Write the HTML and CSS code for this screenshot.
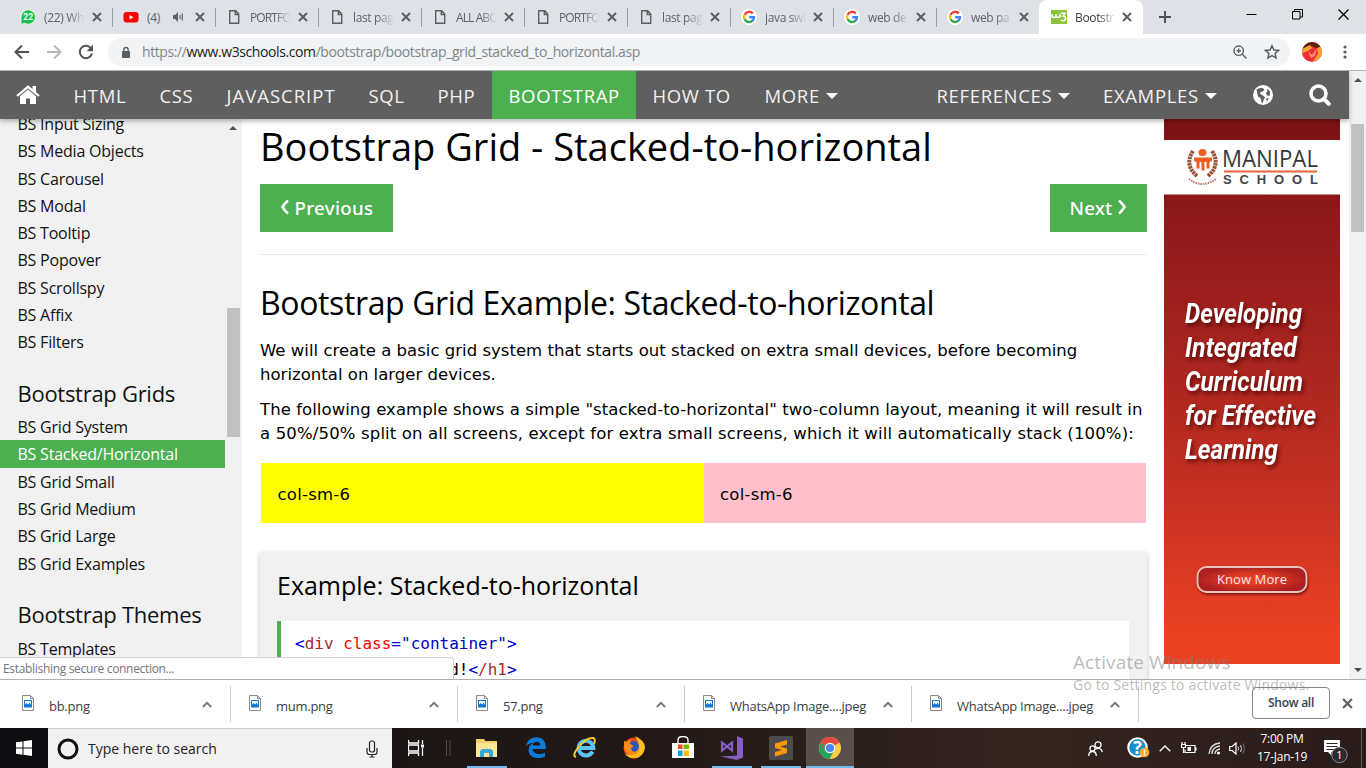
FILE: index.html
```html
<!DOCTYPE html>
<html lang="en">
<head>
<meta charset="utf-8">
<title>Bootstrap Grid - Stacked-to-horizontal</title>
<link rel="stylesheet" href="styles.css">
</head>
<body>
<svg class="defs" width="0" height="0">
  <symbol id="x" viewBox="0 0 10 10"><path d="M1 1l8 8M9 1L1 9" stroke="#5a5d61" stroke-width="1.9" fill="none"/></symbol>
  <symbol id="doc" viewBox="0 0 16 16"><path d="M3.7 1.700h6l3 3.300v9.300h-9zM9.300 2v3.500h3.400" stroke="#5a5d61" stroke-width="1.400" fill="none"/></symbol>
  <symbol id="google" viewBox="0 0 16 16"><circle cx="8" cy="8" r="8" fill="#fff"/><g fill="none" stroke-width="2.400"><path d="M11.800 4.400A5 5 0 0 0 3.600 5.700" stroke="#ea4335"/><path d="M3.600 5.700a5 5 0 0 0 0 4.600" stroke="#fbbc05"/><path d="M3.600 10.300a5 5 0 0 0 7.900 1.400" stroke="#34a853"/><path d="M11.300 11.900A5 5 0 0 0 13 8.200H8.200" stroke="#4285f4"/></g></symbol>
  <symbol id="img" viewBox="0 0 12 16"><path d="M.5.500h8l3 3v12H.5z" fill="#fff" stroke="#8a8a8a"/><path d="M8.500.500v3h3" fill="none" stroke="#8a8a8a"/><rect x="2" y="5" width="8" height="7.500" fill="#1279d7"/><path d="M3 6h6v4L7.500 7.500 6.200 9.500 4.600 8 3 9.500z" fill="#fff"/></symbol>
  <symbol id="up" viewBox="0 0 10 7"><path d="M.8 6L5 1.800 9.200 6" stroke="#777" stroke-width="1.900" fill="none"/></symbol>
</svg>

<header class="tabs">
  <div class="tab"><svg class="fav" viewBox="0 0 16 16"><path d="M1 15.500V8a7.200 7.200 0 1 1 3.500 6.200z" fill="#12c24c" stroke="#fff" stroke-width=".8"/><text x="8.200" y="10.900" text-anchor="middle" class="wa">22</text></svg><span class="title">(22) Wh</span><svg class="x"><use href="#x"/></svg></div>
  <div class="tab"><svg class="fav" viewBox="0 0 16 16"><rect x=".5" y="3" width="15" height="10.500" rx="3" fill="#f00"/><path d="M6.500 6v4.500L10.500 8.200z" fill="#fff"/></svg><span class="title short">(4)</span><svg class="snd" viewBox="0 0 12 12"><path d="M1 4h2l3-3v10L3 8H1z" fill="#5f6368"/><path d="M8 4v4M10.300 2.500v7" stroke="#5f6368" stroke-width="1.200"/></svg><svg class="x"><use href="#x"/></svg></div>
  <div class="tab"><svg class="fav"><use href="#doc"/></svg><span class="title caps">PORTFO</span><svg class="x"><use href="#x"/></svg></div>
  <div class="tab"><svg class="fav"><use href="#doc"/></svg><span class="title">last pag</span><svg class="x"><use href="#x"/></svg></div>
  <div class="tab"><svg class="fav"><use href="#doc"/></svg><span class="title caps">ALL ABO</span><svg class="x"><use href="#x"/></svg></div>
  <div class="tab"><svg class="fav"><use href="#doc"/></svg><span class="title caps">PORTFO</span><svg class="x"><use href="#x"/></svg></div>
  <div class="tab"><svg class="fav"><use href="#doc"/></svg><span class="title">last pag</span><svg class="x"><use href="#x"/></svg></div>
  <div class="tab"><svg class="fav"><use href="#google"/></svg><span class="title">java swi</span><svg class="x"><use href="#x"/></svg></div>
  <div class="tab"><svg class="fav"><use href="#google"/></svg><span class="title">web de</span><svg class="x"><use href="#x"/></svg></div>
  <div class="tab last"><svg class="fav"><use href="#google"/></svg><span class="title">web pa</span><svg class="x"><use href="#x"/></svg></div>
  <div class="tab active"><svg class="fav" viewBox="0 0 16 16"><rect y="1" width="16" height="14" fill="#8ac43f"/><path d="M1 5v1.500q0 2 2 2t2-2V5m0 1.500q0 2 2 2t2-2V5M10 4.200h4L11.800 7q2.700-.2 2.700 2.200T12 11.700q-1.500 0-2.200-.8" stroke="#fff" stroke-width="1.500" fill="none"/></svg><span class="title">Bootstr</span><svg class="x"><use href="#x"/></svg></div>
  <svg class="plus" viewBox="0 0 12 12"><path d="M6 0v12M0 6h12" stroke="#4a4d51" stroke-width="1.900"/></svg>
  <div class="winctl">
    <svg width="11" height="11"><path d="M.5 5.500h10" stroke="#000"/></svg>
    <svg width="11" height="11"><path d="M.5 2.500h7.500v7.500H.5zM2.500 2.500v-2h8v7.500H8" stroke="#000" fill="none"/></svg>
    <svg width="11" height="11"><path d="M.5.500l10 10M10.500.500l-10 10" stroke="#000" stroke-width="1.200"/></svg>
  </div>
</header>

<div class="toolbar">
  <svg class="nav-ic" viewBox="0 0 16 16"><path d="M15 8H2M8 1.500L1.500 8 8 14.500" stroke="#505357" stroke-width="2" fill="none"/></svg>
  <svg class="nav-ic" viewBox="0 0 16 16"><path d="M1 8h13M8 1.500L14.500 8 8 14.500" stroke="#b5b7ba" stroke-width="2" fill="none"/></svg>
  <svg class="nav-ic" viewBox="0 0 16 16"><path d="M13.200 4.500A6.200 6.200 0 1 0 14 9.500" stroke="#505357" stroke-width="2" fill="none"/><path d="M15 .8v6.400H8.600z" fill="#505357"/></svg>
  <div class="omni">
    <svg class="lock" viewBox="0 0 10 12"><rect x="1" y="4.500" width="8" height="7" rx="1" fill="#5a5d61"/><path d="M2.800 5V3.200a2.200 2.200 0 0 1 4.400 0V5" stroke="#5a5d61" stroke-width="1.300" fill="none"/></svg>
    <span class="url">https://<b>www.w3schools.com</b>/bootstrap/bootstrap_grid_stacked_to_horizontal.asp</span>
    <svg class="mag" viewBox="0 0 14 14"><circle cx="5.700" cy="5.700" r="4.700" stroke="#5a5d61" stroke-width="1.400" fill="none"/><path d="M9 9l4.500 4.500M3.500 5.700h4.400M5.700 3.500v4.400" stroke="#5a5d61" stroke-width="1.400"/></svg>
    <svg class="star" viewBox="0 0 14 14"><path d="M7 1.500l1.700 3.700 4.100.4-3.100 2.700.9 4L7 10.200l-3.600 2.100.9-4L1.200 5.600l4.100-.4z" stroke="#5a5d61" stroke-width="1.300" fill="none"/></svg>
  </div>
  <svg class="avatar" viewBox="0 0 20 20"><defs><clipPath id="av"><circle cx="10" cy="10" r="10"/></clipPath></defs><g clip-path="url(#av)"><path d="M0 0h20v20H0z" fill="#ef2f35"/><path d="M0 0h20v5l-5 2-5-3-10 4z" fill="#5c2410"/><path d="M0 7l8-4 2 3-4 3-6 2zM15 6l5-2v9l-4 5-5 1 5-7z" fill="#f9a137"/><path d="M6 9l4 4 5-7-2 8-4 2z" fill="#ff8a6c"/></g></svg>
  <svg class="dots" viewBox="0 0 4 14"><circle cx="2" cy="2" r="1.600"/><circle cx="2" cy="7" r="1.600"/><circle cx="2" cy="12" r="1.600"/></svg>
</div>

<main class="page">
  <div class="view">
    <nav class="topnav">
      <a class="n-home"><svg width="24" height="20" viewBox="0 0 24 20"><path d="M1 11L12 1.800 23 11" stroke="#fff" stroke-width="2.200" fill="none"/><path d="M16.500 1H20v7l-3.500-3z" fill="#fff"/><path d="M12 4.500l8 6.800V19h-6v-5.500h-4V19H4v-7.700z" fill="#fff"/></svg></a>
      <a class="n-html">HTML</a><a class="n-css">CSS</a><a class="n-js">JAVASCRIPT</a><a class="n-sql">SQL</a><a class="n-php">PHP</a><a class="n-bs">BOOTSTRAP</a><a class="n-how">HOW TO</a><a class="n-more">MORE<i></i></a>
      <a class="n-ref">REFERENCES<i></i></a><a class="n-ex">EXAMPLES<i></i></a>
      <a class="n-globe"><svg width="20" height="20" viewBox="0 0 20 20"><circle cx="10" cy="10" r="10" fill="#fff"/><path d="M3.500 4.500Q6 2.500 9.500 3l2 1.500-1.500 2-2.500.5-.5 2 3 1.500 2 2-1.500 2.500-.5 3-1.500-1-1-4L5 11.500zM14 3.500l3 3-.5 4.500-2.500-.5-1-2.500 1.500-2zM13 13.500l3-.5-2 3.500z" fill="#5f5f5f"/></svg></a>
      <a class="n-search"><svg width="22" height="22" viewBox="0 0 22 22"><circle cx="9.500" cy="9.500" r="7.500" stroke="#fff" stroke-width="3.600" fill="none"/><path d="M15 15l4.800 4.800" stroke="#fff" stroke-width="4" stroke-linecap="round"/></svg></a>
    </nav>
    <div class="cols">
      <aside class="side">
        <div class="links">
          <a>BS Input Sizing</a><a>BS Media Objects</a><a>BS Carousel</a><a>BS Modal</a><a>BS Tooltip</a><a>BS Popover</a><a>BS Scrollspy</a><a>BS Affix</a><a>BS Filters</a>
          <h2>Bootstrap Grids</h2>
          <a>BS Grid System</a><a class="on">BS Stacked/Horizontal</a><a>BS Grid Small</a><a>BS Grid Medium</a><a>BS Grid Large</a><a>BS Grid Examples</a>
          <h2 class="second">Bootstrap Themes</h2>
          <a>BS Templates</a>
        </div>
        <div class="sbar"><i class="tri"></i><i class="thumb"></i></div>
      </aside>
      <article class="content">
        <h1>Bootstrap Grid - Stacked-to-horizontal</h1>
        <div class="pager"><a class="prev"><svg width="10" height="18" viewBox="0 0 10 16"><path d="M8 1.500Q5 4 2.500 8 5 12 8 14.500" stroke="#fff" stroke-width="2.600" fill="none"/></svg>Previous</a><a class="next">Next<svg width="10" height="18" viewBox="0 0 10 16"><path d="M2 1.500Q5 4 7.500 8 5 12 2 14.500" stroke="#fff" stroke-width="2.600" fill="none"/></svg></a></div>
        <hr>
        <h2>Bootstrap Grid Example: Stacked-to-horizontal</h2>
        <p>We will create a basic grid system that starts out stacked on extra small devices, before becoming<br>horizontal on larger devices.</p>
        <p><span class="wide">The following example shows a simple "stacked-to-horizontal" two-column layout, meaning it will result in</span><br><span class="wider">a 50%/50% split on all screens, except for extra small screens, which it will automatically stack (100%):</span></p>
        <div class="row"><div class="yellow">col-sm-6</div><div class="pink">col-sm-6</div></div>
        <section class="example">
          <h3>Example: Stacked-to-horizontal</h3>
          <pre><u>&lt;</u><s>div</s> <em>class</em><u>="container"&gt;</u>
  <u>&lt;</u><s>h1</s><u>&gt;</u>Hello World!<u>&lt;</u><s>/h1</s><u>&gt;</u></pre>
        </section>
      </article>
      <svg class="ad" width="176" height="545" viewBox="0 0 176 545">
        <defs>
          <linearGradient id="ag" x1="0" y1="0" x2="0" y2="1"><stop offset="0" stop-color="#7b1216"/><stop offset=".14" stop-color="#8b1719"/><stop offset=".45" stop-color="#a9251f"/><stop offset=".75" stop-color="#ce3423"/><stop offset=".94" stop-color="#eb4123"/><stop offset="1" stop-color="#ec4223"/></linearGradient>
          <radialGradient id="bg"><stop offset="0" stop-color="#ed4325"/><stop offset=".5" stop-color="#d93722"/><stop offset="1" stop-color="#ab2121"/></radialGradient>
        </defs>
        <rect width="176" height="545" fill="url(#ag)"/>
        <rect y="21" width="176" height="54.500" fill="#fff"/>
        <path d="M29 32q-9 14 4 25M48 32q9 14-4 25" stroke="#9b5139" stroke-width="4" stroke-dasharray="2.500 .7" fill="none"/>
        <path d="M25 60q13 10 27 0" stroke="#b97962" stroke-width="2" stroke-dasharray="1.500 1" fill="none"/>
        <ellipse cx="38.500" cy="33.500" rx="4" ry="3.500" fill="#ef5c22"/>
        <path d="M30 38.500h18v3.500l-2.500 1v6.500h-3V43h-2v8.500h-3V43h-2v6.500h-3V43L30 42z" fill="#ef5c22"/>
        <text x="58" y="48" class="man" textLength="96" lengthAdjust="spacingAndGlyphs">MANIPAL</text>
        <path d="M60 52.500h93" stroke="#e6653a" stroke-width="2"/>
        <text x="59" y="65" class="sch" textLength="95">SCHOOL</text>
        <g class="adt">
          <text x="21" y="204" textLength="117" lengthAdjust="spacingAndGlyphs">Developing</text>
          <text x="21" y="238" textLength="112" lengthAdjust="spacingAndGlyphs">Integrated</text>
          <text x="21" y="272" textLength="118" lengthAdjust="spacingAndGlyphs">Curriculum</text>
          <text x="21" y="306" textLength="131" lengthAdjust="spacingAndGlyphs">for Effective</text>
          <text x="21" y="340" textLength="93" lengthAdjust="spacingAndGlyphs">Learning</text>
        </g>
        <rect x="33.500" y="448" width="109" height="25" rx="9" class="btn"/>
        <text x="53" y="465" class="know" textLength="70">Know More</text>
      </svg>
    </div>
  </div>
  <div class="pbar"><i class="tri"></i><i class="thumb"></i><i class="tri down"></i></div>
  <div class="status">Establishing secure connection...</div>
</main>

<footer class="downloads">
  <div class="dl"><svg class="fi"><use href="#img"/></svg><span>bb.png</span><svg class="up"><use href="#up"/></svg></div>
  <div class="dl"><svg class="fi"><use href="#img"/></svg><span>mum.png</span><svg class="up"><use href="#up"/></svg></div>
  <div class="dl"><svg class="fi"><use href="#img"/></svg><span>57.png</span><svg class="up"><use href="#up"/></svg></div>
  <div class="dl"><svg class="fi"><use href="#img"/></svg><span>WhatsApp Image....jpeg</span><svg class="up"><use href="#up"/></svg></div>
  <div class="dl"><svg class="fi"><use href="#img"/></svg><span>WhatsApp Image....jpeg</span><svg class="up"><use href="#up"/></svg></div>
  <div class="showall">Show all</div>
  <svg class="dlx"><use href="#x"/></svg>
</footer>

<div class="taskbar">
  <div class="start"><svg width="16" height="16" viewBox="0 0 16 16"><path d="M0 2.300L6.500 1.400v6.200H0zM7.500 1.200L16 0v7.600H7.500zM0 8.500h6.500v6.200L0 13.800zM7.500 8.500H16V16l-8.500-1.200z" fill="#fff"/></svg></div>
  <div class="search"><svg width="22" height="22" viewBox="0 0 22 22"><circle cx="11" cy="11" r="9" stroke="#111" stroke-width="3" fill="none"/></svg><span>Type here to search</span><svg class="mic" width="12" height="18" viewBox="0 0 12 18"><rect x="3.500" y="1" width="5" height="11" rx="2" fill="none" stroke="#222" stroke-width="1.200"/><path d="M1 8v4q0 2.500 2.500 2.500h5Q11 14.500 11 12V8M6 14.500V17M3.500 17h5" stroke="#222" stroke-width="1.200" fill="none"/></svg></div>
  <div class="tv"><svg width="16" height="16" viewBox="0 0 16 16"><path d="M.5 0v3h10V0M.5 16v-3h10v3M.5 5h10v6H.5zM14.500 0v4M14.500 8v8" stroke="#fff" stroke-width="1.300" fill="none"/><rect x="13" y="4.500" width="3" height="3" fill="#fff"/></svg></div>
  <svg class="grip" width="5" height="16"><path d="M.5 0v16M4 0v16" stroke="#554d4c"/></svg>
  <div class="apps">
    <div class="app open"><svg width="22" height="19" viewBox="0 0 22 19"><path d="M0 1h8l1.500 2H21v16H0z" fill="#f5ce61"/><path d="M0 5h21v14H0z" fill="#ffe695"/><path d="M4 19v-6l2-2h9l2 2v6h-4v-4H8v4z" fill="#35a8e0"/></svg></div>
    <div class="app"><svg width="20" height="21" viewBox="0 0 20 21"><path d="M0 9.500C1 3 5.500.2 10.500.2c6 0 9.500 4.600 9.300 9.800v2H6.500c.3 3.500 3.300 5 6.500 5 2.300 0 4.300-.6 6-1.600v4c-2 1.100-4.500 1.600-7.200 1.600C6 21 2.500 17.500 2.600 13 2.700 9.500 4.600 7 8 5.700 5 5.700 1.700 6.800 0 9.500zM6.700 8.500h7.600c0-2.500-1.300-3.800-3.600-3.800-2.200 0-3.600 1.500-4 3.800z" fill="#0b7bdc"/></svg></div>
    <div class="app"><svg width="24" height="23" viewBox="0 0 24 23"><path d="M19.500 15.500a7.300 7.300 0 1 1 .8-3.500H7" stroke="#5cc4f2" stroke-width="4" fill="none"/><path d="M3 21Q-1 20 4 13 13 1 20 2q3 .6 1 6" stroke="#f7c82f" stroke-width="2" fill="none"/></svg></div>
    <div class="app"><svg width="24" height="23" viewBox="0 0 24 23"><circle cx="12" cy="12" r="10.500" fill="#f5471d"/><path d="M13 0q9 4 10 11-1 9-9 11-7 1-11-4 6 2 10-1 7-7 0-17z" fill="#ffbd20"/><circle cx="11.500" cy="10.500" r="5.500" fill="#2958b7"/><path d="M2 5l3 1 4-3-1 5 4 2-3 2 1 3q3 2 7-1-2 6-9 5-6-3-6-9z" fill="#ff8a16"/></svg></div>
    <div class="app"><svg width="24" height="23" viewBox="0 0 24 23"><path d="M7 9V4q0-3.500 5-3.500T17 4v5" stroke="#fff" stroke-width="1.300" fill="none"/><path d="M1 7h22v15H1z" fill="#fff"/><path d="M7 8.500h4.500V13H7z" fill="#f04d20"/><path d="M12.500 8.500H18V13h-5.500z" fill="#78b800"/><path d="M7 14.500h4.500V20H7z" fill="#009de8"/><path d="M12.500 14.500H18V20h-5.500z" fill="#ffb900"/></svg></div>
    <div class="app open"><svg width="24" height="24" viewBox="0 0 24 24"><path d="M17 0l6 2.500v19L17 24 0 20.500l17-1z" fill="#865fc5"/><path d="M2 6.500v8L12 6.500v8z" fill="none" stroke="#865fc5" stroke-width="2.200"/></svg></div>
    <div class="app open"><svg width="24" height="24" viewBox="0 0 24 24"><rect width="24" height="24" rx="1.500" fill="#4b4b4b"/><path d="M6 7.500L18 4v4.500l-7 2 7 2V17L6 20.500V16l7-2-7-2z" fill="#ff9800"/></svg></div>
    <div class="app open current"><svg width="22" height="22" viewBox="0 0 22 22"><circle cx="11" cy="11" r="11" fill="#ffcd42"/><path d="M11 11L1.500 5.500A11 11 0 0 1 20.500 5.500z" fill="#e2483d"/><path d="M11 11L1.500 5.500A11 11 0 0 0 10.500 22L15 14z" fill="#1da462"/><path d="M11 5.500h9.500M6 14L1.500 5.500" stroke="#e2483d" stroke-width="1"/><circle cx="11" cy="11" r="5.300" fill="#fff"/><circle cx="11" cy="11" r="4.100" fill="#4a86ee"/></svg></div>
  </div>
  <div class="tray">
    <svg width="15" height="15" viewBox="0 0 15 15"><g stroke="#fff" stroke-width="1.300" fill="none"><circle cx="10" cy="3.800" r="3"/><circle cx="4.500" cy="7.500" r="2.600"/><path d="M7.500 8Q13 6 14.300 11M.7 15q0-4.500 3.800-4.500T8.300 15"/></g></svg>
    <svg class="t-help" width="23" height="22" viewBox="0 0 23 22"><circle cx="10.500" cy="10.500" r="9.300" fill="#168fd0" stroke="#fff" stroke-width="2"/><text x="10.500" y="17" class="q" text-anchor="middle">?</text><circle cx="17.500" cy="15.500" r="4.800" fill="#f8ae22"/><path d="M17.500 12.500v6" stroke="#fff" stroke-width="1.500"/></svg>
    <svg class="t-up" width="12" height="7" viewBox="0 0 12 7"><path d="M.7 6.300L6 1l5.300 5.300" stroke="#fff" stroke-width="1.300" fill="none"/></svg>
    <svg class="t-bat" width="16" height="12" viewBox="0 0 16 12"><path d="M4.500 3.500H14v7H4v-3M15 5.500v3M1 0v2.500M4 0v2.500M.5 2.500h4v3h-4zM2.500 5.500v5.500" stroke="#fff" stroke-width="1.200" fill="none"/><path d="M6.500 5H10v4H6.500z" fill="#fff"/></svg>
    <svg class="t-wifi" width="13" height="13" viewBox="0 0 13 13"><g fill="none" stroke="#ddd" stroke-width="1.300"><path d="M1 12Q2 2 12 1"/><path d="M4 12q0-7 8-8"/><path d="M7 12q0-4 5-5"/></g><circle cx="10.500" cy="11" r="1.600" fill="#fff"/></svg>
    <svg class="t-vol" width="17" height="13" viewBox="0 0 17 13"><path d="M.7 4.500h2.500L7 1v11L3.200 8.500H.7z" stroke="#fff" stroke-width="1.200" fill="none"/><path d="M9 4.500q1.200 2 0 4M11.500 3q2 3.500 0 7" stroke="#ddd" fill="none"/><path d="M14 1.500q3 5 0 10" stroke="#777" fill="none"/></svg>
    <div class="clock"><span>7:00 PM</span><span>17-Jan-19</span></div>
    <svg class="t-note" width="25" height="24" viewBox="0 0 25 24"><path d="M0 1h16v12H7.500v3.500L4 13H0z" fill="#fff"/><path d="M2.500 4.500h11M2.500 7.500h11M2.500 10.500h8" stroke="#30211d"/><circle cx="15.500" cy="16" r="7.700" fill="#2b2b2d" stroke="#8a8a8a"/><text x="15.500" y="20" class="one" text-anchor="middle">1</text></svg>
    <i class="edge"></i>
  </div>
</div>

<div class="watermark"><span class="w1">Activate Windows</span><span class="w2">Go to Settings to activate Windows.</span></div>
</body>
</html>
```
FILE: styles.css
```css
* { box-sizing: border-box; }
body { margin: 0; width: 1366px; height: 768px; overflow: hidden; position: relative; display: flex; flex-direction: column; font-family: "Open Sans", "Noto Sans", sans-serif; background: #fff; }
svg { display: block; flex: none; }
.defs { position: absolute; }

.tabs { height: 34px; flex: none; background: #dee1e6; display: flex; padding-left: 10px; }
.tab { width: 103px; height: 34px; flex: none; display: flex; align-items: center; padding-left: 10px; position: relative; }
.tab::after { content: ""; position: absolute; right: 0; top: 8px; width: 1px; height: 19px; background: #9a9da1; }
.tab.last::after, .tab.active::after { display: none; }
.fav { width: 16px; height: 16px; }
.title { width: 41px; margin-left: 8px; font-size: 12px; letter-spacing: -.35px; color: #5f6368; white-space: nowrap; -webkit-mask-image: linear-gradient(90deg, #000 60%, transparent); }
.title.caps { letter-spacing: -.9px; }
.title.short { width: 18px; -webkit-mask-image: none; }
.snd { width: 12px; height: 12px; margin: 0 0 0 7px; }
.x { width: 10px; height: 10px; margin-left: 7px; }
.snd + .x { margin-left: 11px; }
.wa { font: bold 8.5px Roboto, sans-serif; fill: #fff; }
.tab.active { background: #fff; width: 104px; margin-left: -1px; border-radius: 8px 8px 0 0; padding-left: 12px; }
.tab.active .x { margin-left: 6px; }
.tab.active .title { color: #3c4043; }
.plus { width: 12px; height: 12px; margin: 11px 0 0 16px; }
.winctl { margin-left: auto; display: flex; gap: 35px; padding: 9px 17.500px 0 0; }

.toolbar { height: 37px; flex: none; border-bottom: 1px solid #b0b0b0; display: flex; align-items: center; padding: 0 19px 0 14px; }
.nav-ic { width: 16px; height: 16px; margin-right: 16px; }
.omni { width: 1182px; height: 28px; margin-left: -2px; background: #f1f3f4; border-radius: 14px; display: flex; align-items: center; padding: 0 10px 0 13px; }
.lock { width: 10px; height: 13px; }
.url { flex: 1; margin-left: 11px; padding-bottom: 1px; font-size: 14px; letter-spacing: -.4px; color: #80868b; white-space: nowrap; }
.url b { font-weight: 400; color: #202124; }
.mag { width: 14px; height: 14px; margin-right: 17px; }
.star { width: 16px; height: 16px; }
.avatar { width: 20px; height: 20px; margin-left: 12px; }
.dots { width: 4px; height: 14px; margin-left: auto; fill: #5a5d61; }

.page { height: 608px; flex: none; display: flex; position: relative; overflow: hidden; }
.view { width: 1349px; display: flex; flex-direction: column; }
.topnav { height: 48px; flex: none; background: #5f5f5f; color: #f1f1f1; display: flex; box-shadow: 0 2px 5px rgba(0,0,0,.3); position: relative; z-index: 1; font-size: 18.500px; letter-spacing: .65px; line-height: 51px; white-space: nowrap; }
.topnav a { padding-left: 16.500px; flex: none; display: flex; align-items: center; }
.topnav i { border: 6px solid transparent; border-top-color: #fff; border-bottom: 0; margin: 2px 0 0 6px; }
.n-home { width: 57px; } .n-html { width: 86px; } .n-css { width: 67px; } .n-js { width: 142px; letter-spacing: 1px; } .n-sql { width: 69px; } .n-php { width: 71px; }
.n-bs { width: 144px; background: #4caf50; color: #fff; } .n-how { width: 113px; } .n-more { width: 171px; }
.topnav .n-home { padding-left: 16px; } .topnav .n-more { padding-left: 15.500px; }
.n-ref { width: 166.500px; } .n-ex { width: 149.500px; } .n-globe { width: 56px; } .n-search { width: 56px; }
.cols { height: 560px; display: flex; }

.side { width: 242px; flex: none; background: #f1f1f1; display: flex; overflow: hidden; }
.links { width: 225px; margin-top: -9px; font-size: 16px; }
.links a { display: block; height: 27.300px; line-height: 29px; padding-left: 17.500px; color: #111; letter-spacing: -.22px; white-space: nowrap; }
.links a.on { background: #4caf50; color: #fff; }
.links h2 { margin: 0; height: 57.500px; padding: 22px 0 0 17.500px; font-size: 22px; letter-spacing: -.28px; line-height: 30px; font-weight: 400; color: #111; white-space: nowrap; }
.links h2.second { height: 58.500px; }
.sbar { width: 17px; padding-left: 2px; }
.tri { display: block; border: 4px solid transparent; border-top: 0; border-bottom-color: #505050; width: 8px; }
.sbar .tri { margin: 7px 0 0 2px; }
.sbar .thumb { display: block; width: 13px; height: 129px; margin-top: 178px; background: #c1c1c1; }

.content { width: 905px; flex: none; padding: 0 0 0 18px; color: #000; font-family: "DejaVu Sans", sans-serif; font-size: 16.500px; }
.content h1, .content h2, .content h3 { font-family: "Open Sans", sans-serif; font-weight: 400; margin: 0; white-space: nowrap; }
.content h1 { font-size: 38px; line-height: 54px; height: 65px; }
.pager { display: flex; justify-content: space-between; color: #fff; font-size: 18.700px; font-family: "Noto Sans", "DejaVu Sans", sans-serif; font-weight: 500; }
.pager a { height: 48px; background: #4caf50; display: flex; align-items: center; justify-content: center; gap: 5px; padding-bottom: 2px; }
.prev { width: 133px; letter-spacing: .3px; } .next { width: 97px; letter-spacing: .2px; }
.content hr { border: 0; height: 1px; background: #eaeaea; margin: 22px 0 28px; }
.content h2 { font-size: 32px; letter-spacing: -.38px; line-height: 40px; height: 55.500px; }
.content p { margin: 0 0 11px; line-height: 24px; height: 48px; letter-spacing: .02px; white-space: nowrap; }
.content p .wide { letter-spacing: .06px; }
.content p .wider { letter-spacing: .15px; }
.row { display: flex; margin: 17px 1px 30px; height: 60px; line-height: 63px; letter-spacing: .25px; }
.row div { width: 50%; padding-left: 16.500px; }
.yellow { background: #ff0; } .pink { background: #ffc0cb; }
.example { height: 200px; background: #f1f1f1; box-shadow: 0 1px 5px rgba(0,0,0,.25); padding: 15px 18px 0 17px; }
.example h3 { font-size: 25px; line-height: 35px; height: 53px; }
pre { margin: 0; height: 130px; border-left: 4px solid #4caf50; background: #fff; padding: 10px 14px; font-family: "DejaVu Sans Mono", monospace; font-size: 16px; line-height: 26px; color: #000; }
pre u, pre s, pre em { text-decoration: none; font-style: normal; }
pre u { color: #0000cd; } pre s { color: #a52a2a; } pre em { color: #f00; }

.ad { margin-left: 17px; }
.man { font: 24px "Open Sans", sans-serif; fill: #38383a; }
.sch { font: bold 13px "Liberation Sans", sans-serif; fill: #444; }
.adt { font: italic bold 27px "Roboto", sans-serif; fill: #fff; filter: drop-shadow(2px 3px 2px rgba(60,0,0,.7)); }
.btn { fill: url(#bg); stroke: #e8c4bd; stroke-width: 1.800; filter: drop-shadow(1px 2px 1px rgba(80,0,0,.6)); }
.know { font: 13px "Open Sans", sans-serif; fill: #ffe9e2; }

.pbar { width: 17px; background: #f1f1f1; }
.pbar .tri { margin: 7px 0 0 4.500px; }
.pbar .thumb { display: block; width: 13px; height: 108px; margin: 42px 0 0 2px; background: #c1c1c1; }
.pbar .down { margin-top: 436px; transform: scaleY(-1); }
.status { position: absolute; left: 0; bottom: 0; width: 454px; height: 22px; border: 1px solid #d0d0d0; border-width: 1px 1px 0 0; border-radius: 0 4px 0 0; background: #fff; color: #757575; font-size: 12px; letter-spacing: -.32px; line-height: 21px; padding-left: 3px; }

.downloads { height: 49px; flex: none; border-top: 1px solid #b0b0b0; display: flex; background: #fff; color: #3c4043; font-size: 13px; }
.dl { width: 227px; height: 36px; margin-top: 6px; border-right: 1px solid #ccc; display: flex; padding: 9px 18px 0 22px; flex: none; }
.dl:first-child { width: 231px; }
.dl:nth-child(n+2) { padding-left: 18px; }
.fi { width: 12px; height: 16px; }
.dl span { margin: 2px auto 0 15px; line-height: 18px; letter-spacing: -.27px; white-space: nowrap; }
.up { width: 10px; height: 7px; margin-top: 6px; }
.dl:nth-child(n+4) span { margin-right: 0; width: 153px; }
.showall { width: 78px; height: 32px; margin: 7px 0 0 113px; border: 1px solid #80868b; border-radius: 4px; text-align: center; line-height: 30px; font-size: 12px; letter-spacing: -.25px; font-weight: 600; }
.dlx { width: 11px; height: 11px; margin: 18px 0 0 12px; }

.taskbar { height: 40px; flex: none; display: flex; background: linear-gradient(90deg, #0c0d10 0, #1c1615 30%, #241a18 50%, #33241f 75%, #2a1c1a 100%); }
.start { width: 48px; display: flex; align-items: center; justify-content: center; }
.search { width: 344px; background: #f2f2f2; border-top: 1px solid #ccc; display: flex; align-items: center; padding: 0 14px 0 9px; font-size: 14px; color: #222; }
.search span { margin-left: 9px; letter-spacing: 0; }
.mic { margin-left: auto; }
.tv { width: 48px; display: flex; align-items: center; justify-content: center; }
.grip { margin: 12px 0 0 6px; }
.apps { display: flex; margin-left: 12px; }
.app { width: 49px; display: flex; align-items: center; justify-content: center; border-bottom: 2px solid transparent; padding-top: 1px; position: relative; }
.app svg { margin-right: 2px; }
.app.open::after { content: ""; position: absolute; bottom: -2px; left: 4px; right: 5px; height: 2px; background: #76b9ed; }
.app.current { width: 48px; background-color: #5b4f4c; border-bottom: 0; padding-bottom: 2px; }
.app.current svg { margin-right: 0; }
.app.current::after { left: 0; right: 0; bottom: 0; }
.tray { margin-left: auto; display: flex; align-items: center; color: #fff; }
.t-help { margin-left: 24px; } .t-up { margin-left: 9px; } .t-bat { margin-left: 10px; } .t-wifi { margin-left: 11px; } .t-vol { margin-left: 8px; }
.q { font: bold 18px "Open Sans", sans-serif; fill: #fff; } .one { font: 11px "Open Sans", sans-serif; fill: #fff; }
.clock { width: 77px; padding-right: 5px; display: flex; flex-direction: column; align-items: center; font-size: 12px; line-height: 18px; letter-spacing: -.25px; }
.t-note { margin-left: 1px; margin-top: 5px; }
.edge { width: 1px; height: 40px; background: #6c615f; margin: 0 4px 0 12px; }

.watermark { position: absolute; left: 1073px; top: 651px; color: rgba(130,130,130,.55); display: flex; flex-direction: column; white-space: nowrap; }
.w1 { font-size: 19px; line-height: 23px; letter-spacing: .1px; }
.w2 { font-size: 14px; line-height: 22px; letter-spacing: .2px; }
```
